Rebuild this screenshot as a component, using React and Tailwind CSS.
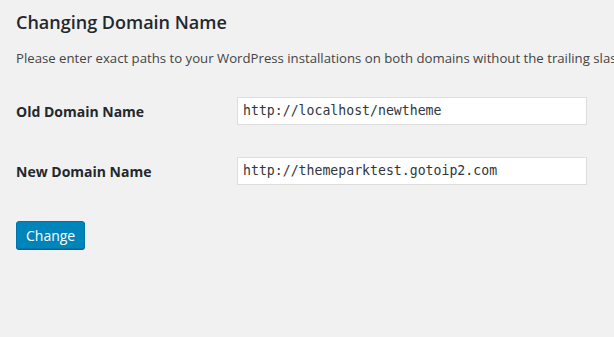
export default function App() {
  const rows = [
    { label: 'Old Domain Name', value: 'http://localhost/newtheme' },
    { label: 'New Domain Name', value: 'http://themeparktest.gotoip2.com' },
  ]

  return (
    <div className="min-h-screen w-[614px] overflow-hidden bg-[#f1f1f1] pl-4 pt-[9px] font-['Open_Sans','Noto_Sans',sans-serif] text-[#444]">
      <h2 className="text-[18px] font-semibold leading-[26px] text-[#23282d]">Changing Domain Name</h2>
      <p className="mt-[13px] whitespace-nowrap text-[13.2px] leading-[20px]">
        Please enter exact paths to your WordPress installations on both domains without the trailing slash.
      </p>

      <div className="mt-[29px] flex flex-col gap-[32px]">
        {rows.map((r) => (
          <div key={r.label} className="flex items-center">
            <span className="w-[221px] shrink-0 text-[14px] font-bold text-[#23282d]">{r.label}</span>
            <div className="flex h-[28px] w-[350px] items-center border border-[#ddd] bg-white px-[5px] font-['DejaVu_Sans_Mono',monospace] text-[13.2px] text-[#32373c]">
              {r.value}
            </div>
          </div>
        ))}
      </div>

      <button className="mt-[36px] h-[28px] rounded-[3px] border border-[#0073aa] bg-[#0085ba] px-[9px] text-[14px] text-white shadow-[0_1px_0_#006799]">
        Change
      </button>
    </div>
  )
}
